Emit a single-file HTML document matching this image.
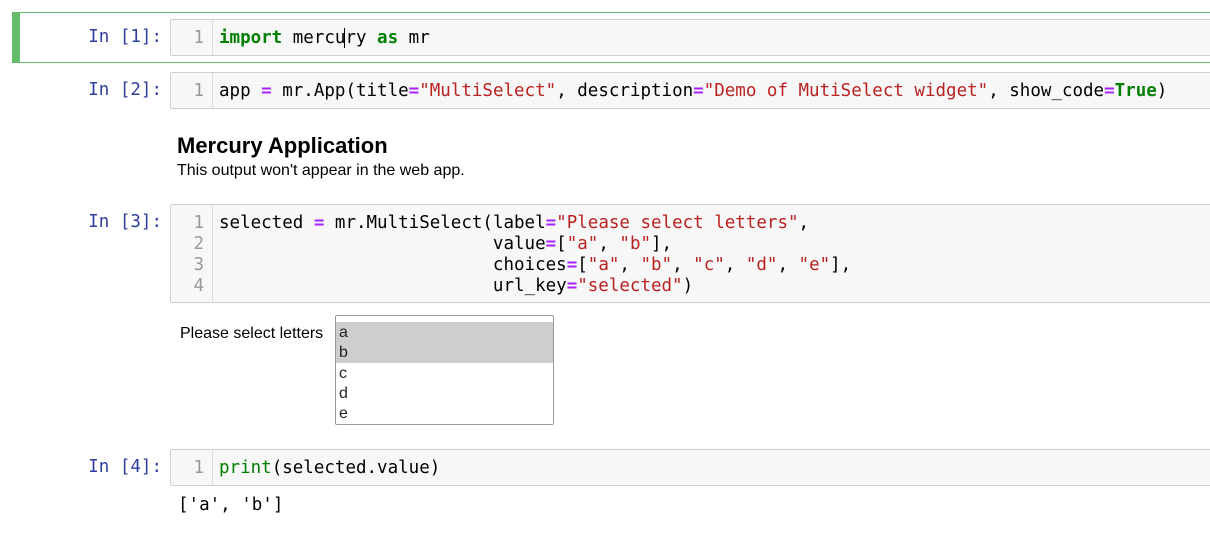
<!DOCTYPE html>
<html><head><meta charset="utf-8"><style>
*{margin:0;padding:0;box-sizing:border-box}
body{width:1210px;height:545px;background:#fff;position:relative;overflow:hidden;font-family:"Liberation Sans",sans-serif}
.mono{font-family:"DejaVu Sans Mono","Liberation Mono",monospace;font-size:17.5px;white-space:pre}
.prompt{position:absolute;color:#303f9f;right:1048px;text-align:right}
.inp{position:absolute;left:170px;width:1045px;background:#f7f7f7;border:1px solid #cfcfcf;border-radius:2px}
.gut{position:absolute;left:0;top:0;bottom:0;width:42px;border-right:1px solid #ddd;background:#f7f7f7}
.ln{position:absolute;right:8px;color:#999;text-align:right}
.code{position:absolute;left:48px;color:#000}
.k{color:#008000;font-weight:bold}.o{color:#aa22ff;font-weight:bold}.s{color:#ba2121}.b{color:#008000}
</style></head><body>
<div style="position:absolute;left:12px;top:12px;width:1200px;height:51px;border:1px solid #66bb6a;border-left:8px solid #66bb6a"></div>

<div class="mono prompt" style="top:27px">In [1]:</div>
<div class="inp mono" style="top:19px;height:37px"><div class="gut"><div class="ln" style="top:8px">1</div></div>
<div class="code" style="top:8px"><span class="k">import</span> mercu<span style="border-left:1px solid #000;margin-left:-1px"></span>ry <span class="k">as</span> mr</div></div>

<div class="mono prompt" style="top:80px">In [2]:</div>
<div class="inp mono" style="top:72px;height:37px"><div class="gut"><div class="ln" style="top:8px">1</div></div>
<div class="code" style="top:8px">app <span class="o">=</span> mr.App(title<span class="o">=</span><span class="s">"MultiSelect"</span>, description<span class="o">=</span><span class="s">"Demo of MutiSelect widget"</span>, show_code<span class="o">=</span><span class="k">True</span>)</div></div>

<div style="position:absolute;left:177px;top:133px;font-size:22px;font-weight:bold">Mercury Application</div>
<div style="position:absolute;left:177px;top:162px;font-size:16px">This output won't appear in the web app.</div>

<div class="mono prompt" style="top:212px">In [3]:</div>
<div class="inp mono" style="top:204px;height:99px"><div class="gut">
<div class="ln" style="top:8px">1</div><div class="ln" style="top:29px">2</div><div class="ln" style="top:50px">3</div><div class="ln" style="top:71px">4</div></div>
<div class="code" style="top:8px;line-height:21px">selected <span class="o">=</span> mr.MultiSelect(label<span class="o">=</span><span class="s">"Please select letters"</span>,
                          value<span class="o">=</span>[<span class="s">"a"</span>, <span class="s">"b"</span>],
                          choices<span class="o">=</span>[<span class="s">"a"</span>, <span class="s">"b"</span>, <span class="s">"c"</span>, <span class="s">"d"</span>, <span class="s">"e"</span>],
                          url_key<span class="o">=</span><span class="s">"selected"</span>)</div></div>

<div style="position:absolute;left:180px;top:325px;font-size:16px">Please select letters</div>
<div style="position:absolute;left:335px;top:315px;width:219px;height:110px;border:1px solid #999;border-radius:2px;font-size:16px;color:#222;line-height:20px;padding-top:6px">
<div style="background:#cecece;padding-left:3px;height:41px;padding-top:1px">a<br>b</div>
<div style="padding-left:3px;padding-top:1px">c<br>d<br>e</div></div>

<div class="mono prompt" style="top:457px">In [4]:</div>
<div class="inp mono" style="top:449px;height:37px"><div class="gut"><div class="ln" style="top:8px">1</div></div>
<div class="code" style="top:8px"><span class="b">print</span>(selected.value)</div></div>
<div class="mono" style="position:absolute;left:178px;top:495px">['a', 'b']</div>
</body></html>
